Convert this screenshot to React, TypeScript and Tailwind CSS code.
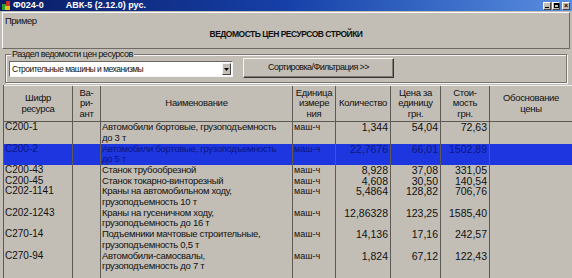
import React from "react";

const font = "font-['Liberation_Sans',Arial,sans-serif]";

interface Row {
  code: string;
  name: string[];
  unit: string;
  qty: string;
  price: string;
  cost: string;
  selected?: boolean;
}

const rows: Row[] = [
  { code: "C200-1", name: ["Автомобили бортовые, грузоподъемность", "до 3 т"], unit: "маш-ч", qty: "1,344", price: "54,04", cost: "72,63" },
  { code: "C200-2", name: ["Автомобили бортовые, грузоподъемность", "до 5 т"], unit: "маш-ч", qty: "22,7676", price: "66,01", cost: "1502,89", selected: true },
  { code: "C200-43", name: ["Станок трубообрезной"], unit: "маш-ч", qty: "8,928", price: "37,08", cost: "331,05" },
  { code: "C200-45", name: ["Станок токарно-винторезный"], unit: "маш-ч", qty: "4,608", price: "30,50", cost: "140,54" },
  { code: "C202-1141", name: ["Краны на автомобильном ходу,", "грузоподъемность 10 т"], unit: "маш-ч", qty: "5,4864", price: "128,82", cost: "706,76" },
  { code: "C202-1243", name: ["Краны на гусеничном ходу,", "грузоподъемность до 16 т"], unit: "маш-ч", qty: "12,86328", price: "123,25", cost: "1585,40" },
  { code: "C270-14", name: ["Подъемники мачтовые строительные,", "грузоподъемность 0,5 т"], unit: "маш-ч", qty: "14,136", price: "17,16", cost: "242,57" },
  { code: "C270-94", name: ["Автомобили-самосвалы,", "грузоподъемность до 7 т"], unit: "маш-ч", qty: "1,824", price: "67,12", cost: "122,43" },
];

const cols = "grid grid-cols-[69px_28px_192px_43px_55px_50px_49px_1fr]";

function HeadCell({ lines, last }: { lines: string[]; last?: boolean }) {
  return (
    <div
      className={`flex flex-col items-center justify-center whitespace-nowrap text-center leading-[10.5px] ${
        last ? "" : "border-r border-[#5d5a55]"
      }`}
    >
      {lines.map((l) => (
        <span key={l}>{l}</span>
      ))}
    </div>
  );
}

function TableRow({ row }: { row: Row }) {
  const h = row.name.length > 1 ? "h-[21.5px]" : "h-[10.5px]";
  const bg = row.selected ? "bg-[#1e36e0] text-[#0b1680]" : "";
  const cell = "border-r border-[#5d5a55] leading-[10.5px] whitespace-nowrap";
  return (
    <div className={`${cols} ${h} ${bg}`}>
      <div className={`${cell} pl-[1px] text-[10px]`}>{row.code}</div>
      <div className={cell}></div>
      <div className={`${cell} pl-[1px] text-[9.5px] tracking-[-0.3px]`}>
        {row.name.map((n) => (
          <div key={n}>{n}</div>
        ))}
      </div>
      <div className={`${cell} pl-[1px] text-[9px]`}>{row.unit}</div>
      <div className={`${cell} pr-[2px] text-right text-[10.5px]`}>{row.qty}</div>
      <div className={`${cell} pr-[2px] text-right text-[10.5px]`}>{row.price}</div>
      <div className={`${cell} pr-[2px] text-right text-[10.5px]`}>{row.cost}</div>
      <div></div>
    </div>
  );
}

export default function App() {
  return (
    <div className={`w-[572px] h-[278px] overflow-hidden bg-[#c2beb6] text-[10px] text-[#111] ${font}`}>
      {/* title bar */}
      <div className="flex h-[11px] items-center bg-gradient-to-r from-[#0a1d66] via-[#1640a8] to-[#5a8ee0] text-[9px] font-bold text-white">
        <svg width="9" height="9" viewBox="0 0 9 9" className="ml-[2px]">
          <rect x="0" y="3" width="4" height="6" fill="#2aa02a" />
          <rect x="4" y="0" width="4" height="5" fill="#d03020" />
          <rect x="3" y="5" width="5" height="4" fill="#e0c020" />
        </svg>
        <span className="ml-[2px]">Ф024-0</span>
        <span className="ml-[22px]">АВК-5 (2.12.0) рус.</span>
        <div className="ml-auto mr-[2px] flex gap-[1px]">
          <div className="flex h-[8px] w-[8px] items-end justify-center border border-[#fff] border-b-[#444] border-r-[#444] bg-[#c2beb6] pb-[1px]">
            <div className="h-[1px] w-[4px] bg-black" />
          </div>
          <div className="flex h-[8px] w-[8px] items-center justify-center border border-[#fff] border-b-[#444] border-r-[#444] bg-[#c2beb6]">
            <div className="h-[5px] w-[5px] border border-t-2 border-black" />
          </div>
          <div className="ml-[1px] flex h-[8px] w-[8px] items-center justify-center border border-[#fff] border-b-[#444] border-r-[#444] bg-[#c2beb6] text-[7px] leading-none text-black">
            ×
          </div>
        </div>
      </div>

      {/* header panel */}
      <div className="mx-[2px] mt-[1px] h-[37px] border border-[#fafafa] border-b-[#6e6a64] border-r-[#6e6a64] px-[2px] pt-[2px]">
        <div className="text-[9.5px] leading-[11px] tracking-[-0.5px]">Пример</div>
        <div className="mt-[2px] text-center text-[8.5px] font-bold tracking-[-0.5px]">
          ВЕДОМОСТЬ ЦЕН РЕСУРСОВ СТРОЙКИ
        </div>
      </div>

      {/* section group */}
      <div className="relative mx-[5px] mt-[5px] h-[29px] border border-[#7a766f] shadow-[inset_1px_1px_0_#f4f4f4,1px_1px_0_#f4f4f4]">
        <span className="absolute -top-[6px] left-[5px] bg-[#c2beb6] px-[1px] text-[9px] leading-[11px] tracking-[-0.5px]">
          Раздел ведомости цен ресурсов
        </span>
        <div className="flex items-center gap-[10px] pl-[3px] pt-[5px]">
          <div className="flex h-[16px] w-[224px] items-center border border-[#6a665f] border-b-[#f4f4f4] border-r-[#f4f4f4] bg-white pl-[2px] text-[8.5px] tracking-[-0.5px]">
            <span className="flex-1">Строительные машины и механизмы</span>
            <div className="mr-[1px] flex h-[12px] w-[9px] items-center justify-center border border-[#f4f4f4] border-b-[#444] border-r-[#444] bg-[#c2beb6]">
              <svg width="5" height="3" viewBox="0 0 5 3">
                <path d="M0 0h5L2.5 3z" fill="#000" />
              </svg>
            </div>
          </div>
          <div className="-mt-[2px] flex h-[20px] w-[151px] items-center justify-center border border-[#f4f4f4] border-b-[#333] border-r-[#333] text-[9px] tracking-[-0.6px] shadow-[inset_-1px_-1px_0_#807c75]">
            Сортировка/Фильтрация &gt;&gt;
          </div>
        </div>
      </div>

      {/* table */}
      <div className="ml-[3px] mt-[2px] border-l border-[#5d5a55]">
        <div className={`${cols} h-[37px] border-b border-t border-[#5d5a55] border-t-[#eeeeee] text-[9.5px] tracking-[-0.3px]`}>
          <HeadCell lines={["Шифр", "ресурса"]} />
          <HeadCell lines={["Ва-", "ри-", "ант"]} />
          <HeadCell lines={["Наименование"]} />
          <HeadCell lines={["Единица", "измере", "ния"]} />
          <HeadCell lines={["Количество"]} />
          <HeadCell lines={["Цена за", "единицу", "грн."]} />
          <HeadCell lines={["Стои-", "мость", "грн."]} />
          <HeadCell lines={["Обоснование", "цены"]} last />
        </div>
        {rows.map((r) => (
          <TableRow key={r.code} row={r} />
        ))}
        <div className={`${cols} h-[10px]`}>
          <div className="border-r border-[#5d5a55]" />
          <div className="border-r border-[#5d5a55]" />
          <div className="border-r border-[#5d5a55]" />
          <div className="border-r border-[#5d5a55]" />
          <div className="border-r border-[#5d5a55]" />
          <div className="border-r border-[#5d5a55]" />
          <div className="border-r border-[#5d5a55]" />
          <div />
        </div>
      </div>
    </div>
  );
}
